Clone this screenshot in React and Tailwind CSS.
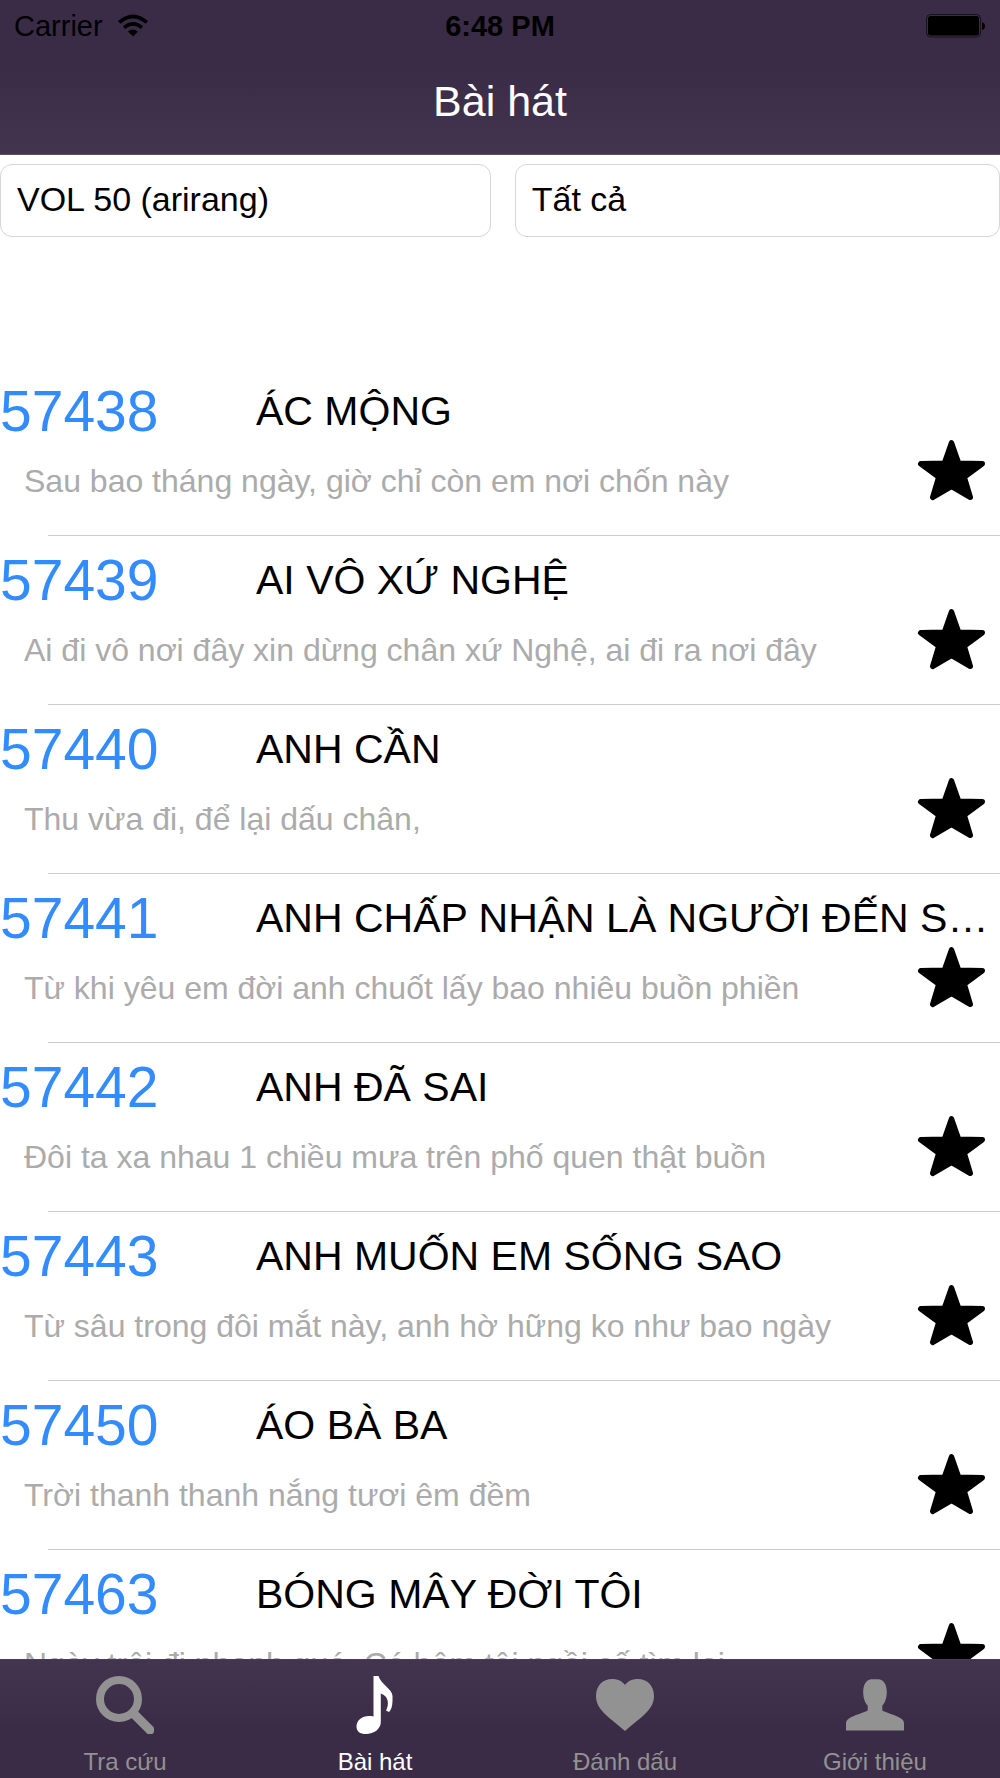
import React from "react";

const songs = [
  { code: "57438", title: "ÁC MỘNG", lyric: "Sau bao tháng ngày, giờ chỉ còn em nơi chốn này" },
  { code: "57439", title: "AI VÔ XỨ NGHỆ", lyric: "Ai đi vô nơi đây xin dừng chân xứ Nghệ, ai đi ra nơi đây" },
  { code: "57440", title: "ANH CẦN", lyric: "Thu vừa đi, để lại dấu chân," },
  { code: "57441", title: "ANH CHẤP NHẬN LÀ NGƯỜI ĐẾN SAU", lyric: "Từ khi yêu em đời anh chuốt lấy bao nhiêu buồn phiền" },
  { code: "57442", title: "ANH ĐÃ SAI", lyric: "Đôi ta xa nhau 1 chiều mưa trên phố quen thật buồn" },
  { code: "57443", title: "ANH MUỐN EM SỐNG SAO", lyric: "Từ sâu trong đôi mắt này, anh hờ hững ko như bao ngày" },
  { code: "57450", title: "ÁO BÀ BA", lyric: "Trời thanh thanh nắng tươi êm đềm" },
  { code: "57463", title: "BÓNG MÂY ĐỜI TÔI", lyric: "Ngày trôi đi nhanh quá. Có hôm tôi ngồi cố tìm lại" },
];

function WifiIcon() {
  return (
    <svg className="h-6 w-8" viewBox="0 0 32 24" aria-hidden="true">
      <path d="M16 22.5 L11 17.6 Q16 13.4 21 17.6 Z" fill="black" />
      <path d="M7 13.6 Q16 6 25 13.6" fill="none" stroke="black" strokeWidth="3.6" />
      <path d="M2.200 8.4 Q16 -3.6 29.8 8.4" fill="none" stroke="black" strokeWidth="3.8" />
    </svg>
  );
}

function BatteryIcon() {
  return (
    <svg className="h-6 w-15" viewBox="0 0 60 24" aria-hidden="true">
      <rect x="0.5" y="0.5" width="54" height="22.5" rx="4" fill="none" stroke="black" strokeOpacity="0.6" />
      <rect x="2" y="2" width="51" height="19.5" rx="2.5" fill="black" />
      <path d="M56 8 Q59 9 59 12 Q59 15 56 16 Z" fill="black" />
    </svg>
  );
}

function StarIcon() {
  return (
    <svg className="h-16 w-[69px]" viewBox="0 0 69 64" aria-hidden="true">
      <path
        d="M34.5 4.800 L41.700 25.300 L65.300 25.800 L47.300 39.200 L53.300 59.300 L34.500 48.400 L15.700 59.300 L21.700 39.200 L3.700 25.800 L27.300 25.300 Z"
        fill="black" stroke="black" strokeWidth="5.400" strokeLinejoin="round"
      />
    </svg>
  );
}

function SearchIcon() {
  return (
    <svg className="size-[58px]" viewBox="0 0 58 58" aria-hidden="true">
      <circle cx="23" cy="23" r="19" fill="none" stroke="currentColor" strokeWidth="8" />
      <path d="M37.500 37.500 L54 54" stroke="currentColor" strokeWidth="9" strokeLinecap="round" />
    </svg>
  );
}

function NoteIcon() {
  return (
    <svg className="size-[58px]" viewBox="0 0 58 58" aria-hidden="true">
      <path
        d="M27.500 0 H32.500 C34 7 46.500 13.500 46.500 20 V25 C46.500 30 45 34 43 36 L40 34.500 C43.500 28 42.500 20 34.800 17.500 V46 C34.800 53 28 58 20 58 C14 58 10.500 55.500 10.500 50.500 C10.500 43 18 38.500 27.500 40.500 Z"
        fill="currentColor"
      />
    </svg>
  );
}

function HeartIcon() {
  return (
    <svg className="size-[58px]" viewBox="0 0 58 58" aria-hidden="true">
      <path
        d="M29 9 C32 5 36 3 42 3 C51 3 58 9.500 58 20 C58 34 45 41 29 55 C13 41 0 34 0 20 C0 9.500 7 3 16 3 C22 3 26 5 29 9 Z"
        fill="currentColor"
      />
    </svg>
  );
}

function PersonIcon() {
  return (
    <svg className="size-[58px]" viewBox="0 0 58 58" aria-hidden="true">
      <path
        d="M25 3.300 H33 C38 4 40.800 9 40.800 16 C40.800 22 39 27 36.300 29.500 V34.500 C41 37 50 39 55 42.500 C57.500 44 58 45.500 58 48 V54.500 H0 V48 C0 45.500 0.500 44 3 42.500 C8 39 17 37 21.700 34.500 V29.500 C19 27 17.200 22 17.200 16 C17.200 9 20 4 25 3.300 Z"
        fill="currentColor"
      />
    </svg>
  );
}

const tabs = [
  { label: "Tra cứu", Icon: SearchIcon },
  { label: "Bài hát", Icon: NoteIcon, active: true },
  { label: "Đánh dấu", Icon: HeartIcon },
  { label: "Giới thiệu", Icon: PersonIcon },
];

function SongRow({ code, title, lyric }) {
  return (
    <li>
      <div className="relative grid h-[168px] grid-cols-[256px_minmax(0,1fr)] content-start">
        <span className="pt-2.5 text-[57px] leading-[68px] text-[#338cff]">{code}</span>
        <h2 className="truncate pt-[19px] pr-2 text-[41px] leading-[50px] text-black">{title}</h2>
        <p className="col-span-2 truncate pt-4 pr-24 pl-6 text-[32px] leading-10 text-[#ababab]">{lyric}</p>
        <button type="button" aria-label={"Đánh dấu " + title} className="absolute right-3.5 bottom-[33px]">
          <StarIcon />
        </button>
      </div>
      <div className="ml-12 h-px bg-[#cccccc]" />
    </li>
  );
}

export default function App() {
  return (
    <div className="flex h-screen flex-col overflow-hidden bg-white font-['Liberation_Sans',Arial,sans-serif]">
      <header className="border-b border-[#5a4d66] bg-linear-to-b from-[#3a2c46] from-45% to-[#43344f]">
        <div className="grid h-13 grid-cols-3 items-center px-3.5 text-[29px] leading-8 text-black">
          <div className="flex items-center gap-3.5">
            <span>Carrier</span>
            <WifiIcon />
          </div>
          <time className="text-center font-bold">6:48 PM</time>
          <div className="flex justify-end">
            <BatteryIcon />
          </div>
        </div>
        <h1 className="flex h-[98px] items-center justify-center text-[43px] text-white">Bài hát</h1>
        <div className="h-1" />
      </header>

      <main className="flex min-h-0 flex-1 flex-col">
        <form className="flex gap-6 pt-[9px]">
          <input
            type="text" aria-label="Danh sách" defaultValue="VOL 50 (arirang)"
            className="h-[73px] w-0 min-w-0 flex-[491] rounded-xl border border-[#d6d6d6] px-4 pb-0.5 text-[34px] text-black"
          />
          <input
            type="text" aria-label="Thể loại" defaultValue="Tất cả"
            className="h-[73px] w-0 min-w-0 flex-[485] rounded-xl border border-[#d6d6d6] px-4 pb-0.5 text-[34px] text-black"
          />
        </form>
        <ul className="mt-[130px] min-h-0 flex-1 overflow-hidden">
          {songs.map((song) => (
            <SongRow key={song.code} {...song} />
          ))}
        </ul>
      </main>

      <nav className="grid h-[119px] shrink-0 grid-cols-4 border-t border-[#4b3d58] bg-linear-to-b from-[#43344f] to-[#3a2c46] to-60%">
        {tabs.map(({ label, Icon, active }) => (
          <button
            key={label} type="button" aria-current={active ? "page" : undefined}
            className={"flex flex-col items-center gap-3.5 pt-4 text-2xl leading-7 " + (active ? "text-white" : "text-[#929292]")}
          >
            <Icon />
            <span>{label}</span>
          </button>
        ))}
      </nav>
    </div>
  );
}
